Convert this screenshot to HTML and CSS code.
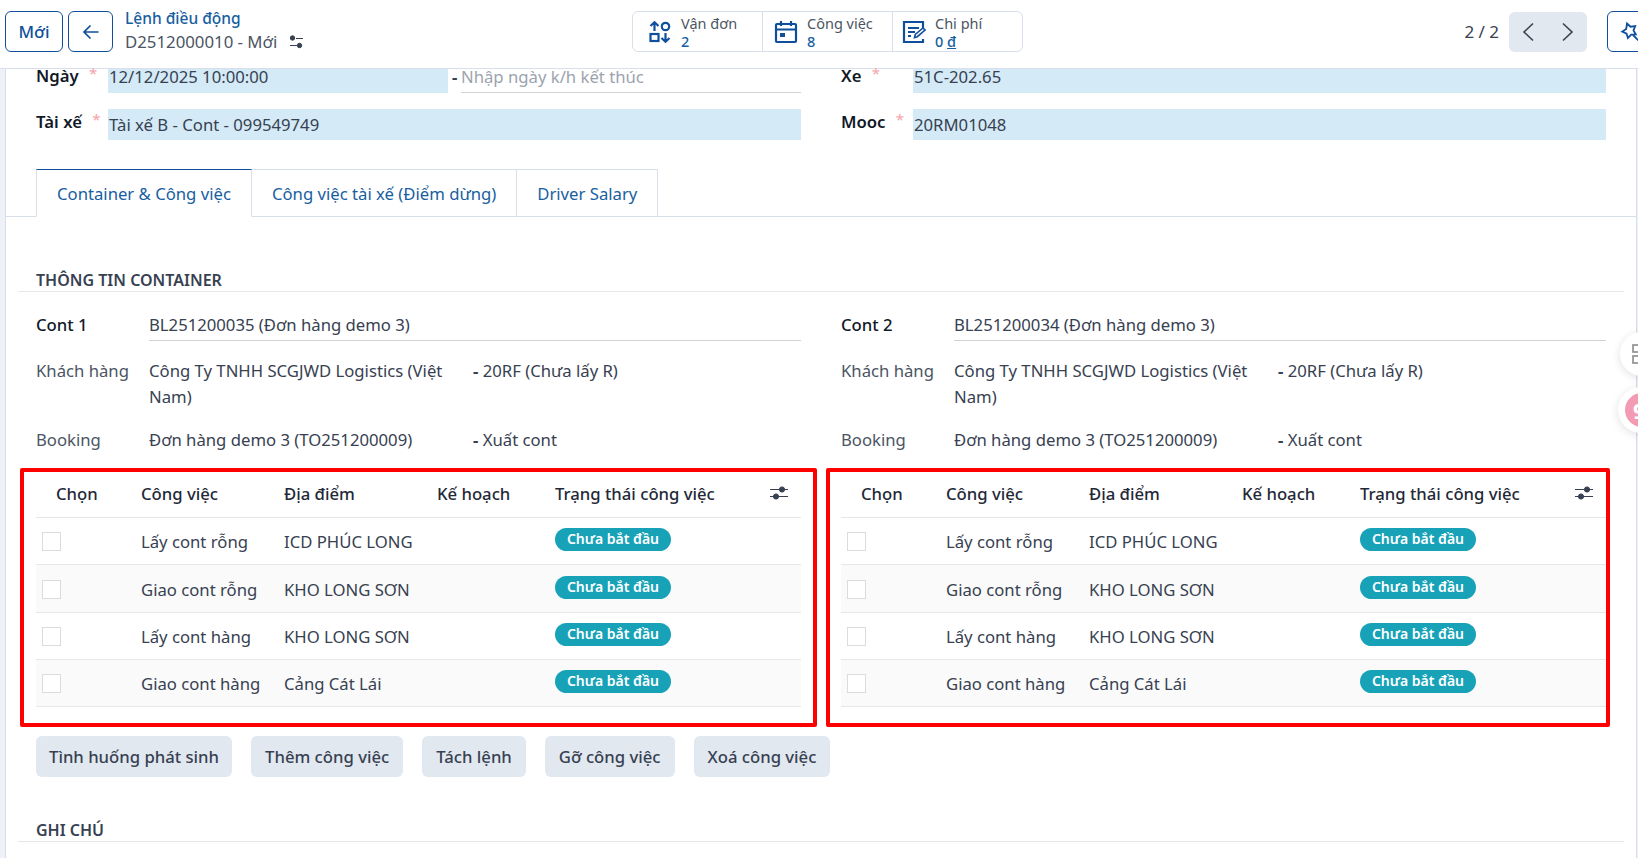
FILE: index.html
```html
<!DOCTYPE html>
<html lang="vi">
<head>
    <meta charset="UTF-8">
    <title>Lệnh điều động</title>
    <link rel="stylesheet" href="styles.css">
</head>
<body>
    <div class="header">
        <div class="header-left">
            <button class="btn-outline btn-new">Mới</button>
            <button class="btn-outline btn-back">
                <svg width="20" height="20" viewBox="0 0 20 20" fill="none" stroke="currentColor" stroke-width="1.7"><path d="M17.500 10H3.500M9.500 3.500 3 10l6.500 6.500"/></svg>
            </button>
            <div class="crumb">
                <a class="crumb-parent">Lệnh điều động</a>
                <div class="crumb-current">
                    <span>D2512000010 - Mới</span>
                    <svg width="15" height="14" viewBox="0 0 15 14" fill="#374151" stroke="#374151"><circle cx="3.500" cy="3" r="2.200"/><circle cx="10.500" cy="10.500" r="2.200"/><path d="M7 3.500h7M1 10.500h7" fill="none" stroke-width="1.200"/></svg>
                </div>
            </div>
        </div>
        <div class="stats">
            <div class="stat">
                <svg width="24" height="24" viewBox="0 0 24 24" fill="none" stroke="#0f4f9c" stroke-width="2.200"><path d="M6.500 11V2.500M2.500 6l4-3.800 4 3.800"/><circle cx="17.500" cy="6.500" r="3.700"/><rect x="2.500" y="14" width="8" height="7"/><path d="M17.500 13v8.500M13.500 18l4 3.800 4-3.800"/></svg>
                <div class="stat-text"><span>Vận đơn</span><b>2</b></div>
            </div>
            <div class="stat">
                <svg width="24" height="24" viewBox="0 0 24 24" fill="none" stroke="#0f4f9c" stroke-width="2.200"><rect x="2" y="4" width="20" height="18" rx="1"/><path d="M2 9.500h20M7 1v5M17 1v5"/><rect x="6" y="13" width="5" height="4" fill="#0f4f9c" stroke="none"/></svg>
                <div class="stat-text"><span>Công việc</span><b>8</b></div>
            </div>
            <div class="stat">
                <svg width="24" height="24" viewBox="0 0 24 24" fill="none" stroke="#0f4f9c" stroke-width="2.200"><path d="M21 8V2H2v20h19v-3"/><path d="M6 8h11M6 12h7M6 16h3"/><path d="M12.500 17.500l.8-3 7.700-6.500 2 2-7.700 6.700z" stroke-width="1.600"/></svg>
                <div class="stat-text"><span>Chi phí</span><b>0 <u>đ</u></b></div>
            </div>
        </div>
        <div class="header-right">
            <span class="pager-count">2 / 2</span>
            <div class="pager-nav">
                <svg width="14" height="20" viewBox="0 0 14 20" fill="none" stroke="#374151" stroke-width="1.600"><path d="M11 1.500 2 10l9 8.500"/></svg>
                <svg width="14" height="20" viewBox="0 0 14 20" fill="none" stroke="#374151" stroke-width="1.600"><path d="M3 1.500 12 10l-9 8.500"/></svg>
            </div>
            <button class="btn-outline btn-star">
                <svg width="22" height="22" viewBox="0 0 22 22" fill="none" stroke="currentColor" stroke-width="1.800"><path d="M8 2.500l3.500 3.200 4.700-.6-1.700 4.400 2.300 4-4.700.2-3.200 3.400-1.300-4.500-4.300-2 3.900-2.600z"/><path d="M14 14l6 6"/></svg>
            </button>
        </div>
    </div>

    <div class="sheet">
        <div class="form-top">
            <div class="field">
                <label>Ngày <i>*</i></label>
                <div class="date-range">
                    <div class="input-req input-start">12/12/2025 10:00:00</div>
                    <span class="dash">-</span>
                    <div class="input-plain">Nhập ngày k/h kết thúc</div>
                </div>
            </div>
            <div class="field">
                <label>Xe <i>*</i></label>
                <div class="input-req input-first">51C-202.65</div>
            </div>
            <div class="field field-tall">
                <label>Tài xế <i>*</i></label>
                <div class="input-req">Tài xế B - Cont - 099549749</div>
            </div>
            <div class="field field-tall">
                <label>Mooc <i>*</i></label>
                <div class="input-req">20RM01048</div>
            </div>
        </div>

        <div class="tabs">
            <a class="tab active">Container &amp; Công việc</a>
            <a class="tab">Công việc tài xế (Điểm dừng)</a>
            <a class="tab">Driver Salary</a>
        </div>

        <h3 class="section-title">THÔNG TIN CONTAINER</h3>

        <div class="conts">
            <div class="cont">
                <div class="info-row info-main">
                    <label>Cont 1</label>
                    <div class="info-value underlined">BL251200035 (Đơn hàng demo 3)</div>
                </div>
                <div class="info-row">
                    <label>Khách hàng</label>
                    <div class="info-value half">Công Ty TNHH SCGJWD Logistics (Việt Nam)</div>
                    <div class="info-extra"><b>-</b> 20RF (Chưa lấy R)</div>
                </div>
                <div class="info-row">
                    <label>Booking</label>
                    <div class="info-value half">Đơn hàng demo 3 (TO251200009)</div>
                    <div class="info-extra"><b>-</b> Xuất cont</div>
                </div>
                <div class="red-box">
                    <table class="job-table">
                        <thead>
                            <tr><th class="col-check">Chọn</th><th class="col-job">Công việc</th><th class="col-place">Địa điểm</th><th class="col-plan">Kế hoạch</th><th>Trạng thái công việc</th><th class="col-opt"><svg width="20" height="18" viewBox="0 0 20 18" fill="#374151" stroke="#374151"><path d="M1 5.500h18M1 12.500h18" fill="none" stroke-width="1.200"/><circle cx="13" cy="5.500" r="2.600"/><circle cx="7" cy="12.500" r="2.600"/></svg></th></tr>
                        </thead>
                        <tbody>
                            <tr><td><span class="check"></span></td><td>Lấy cont rỗng</td><td>ICD PHÚC LONG</td><td></td><td><span class="badge">Chưa bắt đầu</span></td><td></td></tr>
                            <tr><td><span class="check"></span></td><td>Giao cont rỗng</td><td>KHO LONG SƠN</td><td></td><td><span class="badge">Chưa bắt đầu</span></td><td></td></tr>
                            <tr><td><span class="check"></span></td><td>Lấy cont hàng</td><td>KHO LONG SƠN</td><td></td><td><span class="badge">Chưa bắt đầu</span></td><td></td></tr>
                            <tr><td><span class="check"></span></td><td>Giao cont hàng</td><td>Cảng Cát Lái</td><td></td><td><span class="badge">Chưa bắt đầu</span></td><td></td></tr>
                        </tbody>
                    </table>
                </div>
            </div>
            <div class="cont">
                <div class="info-row info-main">
                    <label>Cont 2</label>
                    <div class="info-value underlined">BL251200034 (Đơn hàng demo 3)</div>
                </div>
                <div class="info-row">
                    <label>Khách hàng</label>
                    <div class="info-value half">Công Ty TNHH SCGJWD Logistics (Việt Nam)</div>
                    <div class="info-extra"><b>-</b> 20RF (Chưa lấy R)</div>
                </div>
                <div class="info-row">
                    <label>Booking</label>
                    <div class="info-value half">Đơn hàng demo 3 (TO251200009)</div>
                    <div class="info-extra"><b>-</b> Xuất cont</div>
                </div>
                <div class="red-box red-box-right">
                    <table class="job-table">
                        <thead>
                            <tr><th class="col-check">Chọn</th><th class="col-job">Công việc</th><th class="col-place">Địa điểm</th><th class="col-plan">Kế hoạch</th><th>Trạng thái công việc</th><th class="col-opt"><svg width="20" height="18" viewBox="0 0 20 18" fill="#374151" stroke="#374151"><path d="M1 5.500h18M1 12.500h18" fill="none" stroke-width="1.200"/><circle cx="13" cy="5.500" r="2.600"/><circle cx="7" cy="12.500" r="2.600"/></svg></th></tr>
                        </thead>
                        <tbody>
                            <tr><td><span class="check"></span></td><td>Lấy cont rỗng</td><td>ICD PHÚC LONG</td><td></td><td><span class="badge">Chưa bắt đầu</span></td><td></td></tr>
                            <tr><td><span class="check"></span></td><td>Giao cont rỗng</td><td>KHO LONG SƠN</td><td></td><td><span class="badge">Chưa bắt đầu</span></td><td></td></tr>
                            <tr><td><span class="check"></span></td><td>Lấy cont hàng</td><td>KHO LONG SƠN</td><td></td><td><span class="badge">Chưa bắt đầu</span></td><td></td></tr>
                            <tr><td><span class="check"></span></td><td>Giao cont hàng</td><td>Cảng Cát Lái</td><td></td><td><span class="badge">Chưa bắt đầu</span></td><td></td></tr>
                        </tbody>
                    </table>
                </div>
            </div>
        </div>

        <div class="actions">
            <button class="btn-gray">Tình huống phát sinh</button>
            <button class="btn-gray">Thêm công việc</button>
            <button class="btn-gray">Tách lệnh</button>
            <button class="btn-gray">Gỡ công việc</button>
            <button class="btn-gray">Xoá công việc</button>
        </div>

        <h3 class="section-title section-note">GHI CHÚ</h3>
    </div>

    <!-- floating helpers on the right edge -->
    <div class="float-btn float-grid">
        <svg width="16" height="20" viewBox="0 0 16 20" fill="none" stroke="#8a8a8a" stroke-width="1.600"><rect x="1" y="1" width="12" height="7"/><rect x="1" y="12" width="12" height="7"/></svg>
    </div>
    <div class="float-btn float-pink"><span class="pink-dot">9</span></div>
</body>
</html>
```

FILE: styles.css
```css
* {
    box-sizing: border-box;
    margin: 0;
    padding: 0;
}
html, body {
    height: 858px;
    overflow: hidden;
}
body {
    background-color: #eef1f8;
    color: #374151;
    font-family: "Noto Sans", Arial, sans-serif;
    font-size: 16.700px;
    position: relative;
}
button {
    font-family: inherit;
}

/* Header */
.header {
    height: 69px;
    background-color: #fff;
    border-bottom: 1px solid #d8dfeb;
    padding: 11px 0 0 5px;
    display: flex;
    align-items: flex-start;
}
.header-left {
    width: 627px;
    display: flex;
    align-items: flex-start;
    gap: 5px;
}
.btn-outline {
    height: 41px;
    background-color: #fff;
    border: 1px solid #0f4f9c;
    border-radius: 6px;
    color: #0f4f9c;
    display: flex;
    align-items: center;
    justify-content: center;
}
.btn-new {
    width: 58px;
    font-size: 17px;
    font-weight: 500;
}
.btn-back {
    width: 45px;
}
.crumb {
    margin-left: 7px;
    margin-top: -5px;
    line-height: 24px;
}
.crumb-parent {
    display: block;
    color: #17609f;
    font-size: 15.500px;
    font-weight: 500;
}
.crumb-current {
    display: flex;
    align-items: center;
    gap: 12px;
    font-size: 16.800px;
    color: #4b5563;
}
.stats {
    width: 391px;
    height: 41px;
    display: flex;
    border: 1px solid #d8dfeb;
    border-radius: 6px;
}
.stat {
    width: 130px;
    flex: none;
    display: flex;
    align-items: center;
    gap: 9px;
    padding-left: 15px;
    border-right: 1px solid #d8dfeb;
}
.stat:nth-child(2) {
    padding-left: 11px;
}
.stat:last-child {
    padding-left: 9px;
    border-right: none;
}
.stat-text {
    display: flex;
    flex-direction: column;
    padding-top: 1px;
    font-size: 14.500px;
    line-height: 18px;
    color: #4b5563;
}
.stat-text b {
    color: #17609f;
    font-weight: 500;
}
.header-right {
    margin-left: auto;
    margin-right: -14px;
    display: flex;
    align-items: center;
    height: 41px;
}
.pager-count {
    font-size: 17px;
    margin-right: 10px;
}
.pager-nav {
    width: 78px;
    height: 40px;
    background-color: #e2e8f0;
    border-radius: 6px;
    display: flex;
    justify-content: space-between;
    align-items: center;
    padding: 0 13px;
}
.btn-star {
    width: 45px;
    margin-left: 20px;
}

/* Sheet */
.sheet {
    height: 789px;
    margin: 0 1px 0 5px;
    padding: 0 30px;
    background-color: #fff;
    border-left: 1px solid #d8dfeb;
    border-right: 1px solid #d8dfeb;
}
.form-top {
    display: grid;
    grid-template-columns: 1fr 1fr;
    column-gap: 40px;
}
.field {
    display: flex;
    height: 24px;
}
.field-tall {
    height: 31px;
    margin-top: 16px;
}
.field label {
    width: 72px;
    font-weight: 600;
    color: #111827;
    line-height: 14px;
    flex-shrink: 0;
}
.field-tall label {
    line-height: 26px;
}
.field i {
    color: #f5a3a8;
    font-style: normal;
    font-weight: 400;
    font-size: 15px;
    position: relative;
    top: -3px;
    margin-left: 6px;
}
.input-req {
    flex: 1;
    background-color: #d4eaf7;
    padding-left: 1px;
    line-height: 31px;
    color: #374151;
}
.input-first {
    line-height: 16px;
}
.date-range {
    flex: 1;
    display: flex;
}
.input-start {
    flex: none;
    width: 340px;
    line-height: 16px;
}
.dash {
    width: 13px;
    padding-left: 4px;
    font-weight: 700;
    line-height: 16px;
}
.input-plain {
    flex: 1;
    color: #9ca3af;
    border-bottom: 1px solid #cfd2d6;
    line-height: 16px;
}

/* Tabs */
.tabs {
    display: flex;
    margin: 29px -30px 0;
    padding-left: 30px;
    border-bottom: 1px solid #d8dfeb;
    height: 48px;
}
.tab {
    height: 48px;
    line-height: 48px;
    padding: 0 20px;
    color: #17609f;
    border-top: 1px solid #d8dfeb;
    border-right: 1px solid #d8dfeb;
}
.tab.active {
    border-top-color: #0f4f9c;
    border-left: 1px solid #d8dfeb;
    border-bottom: 1px solid #fff;
}

.section-title {
    margin: 53px -18px 0;
    padding: 0 0 1px 18px;
    font-size: 16px;
    font-weight: 600;
    line-height: 20px;
    color: #374151;
    border-bottom: 1px solid #e5e7eb;
}

/* Container info */
.conts {
    display: grid;
    grid-template-columns: 1fr 1fr;
    column-gap: 40px;
    margin-top: 20px;
}
.info-row {
    display: flex;
    margin-top: 17px;
    line-height: 26px;
}
.info-main {
    margin-top: 0;
}
.info-row label {
    width: 113px;
    flex-shrink: 0;
    color: #4b5563;
}
.info-main label {
    color: #111827;
    font-weight: 500;
}
.info-value {
    flex: 1;
}
.underlined {
    border-bottom: 1px solid #cfd2d6;
    height: 29px;
}
.half {
    flex: none;
    width: 324px;
}
.info-extra b {
    font-weight: 700;
}
.red-box {
    margin: 15px -16px 0;
    padding: 0 12px 16px;
    border: 4px solid #ff0000;
    border-radius: 2px;
}
.red-box-right {
    margin-left: -15px;
    margin-right: -4px;
    padding-left: 11px;
    padding-right: 0;
}
.job-table {
    width: 100%;
    border-collapse: collapse;
    table-layout: fixed;
}
.job-table th {
    text-align: left;
    font-weight: 500;
    color: #1f2937;
    height: 45px;
    padding-bottom: 2px;
    border-bottom: 1px solid #e5e7eb;
}
.job-table td {
    height: 47px;
    padding-top: 2px;
    border-bottom: 1px solid #e5e7eb;
    vertical-align: middle;
}
.job-table tbody tr:nth-child(2) td {
    height: 48px;
}
.job-table tbody tr:nth-child(even) {
    background-color: #fafafa;
}
.col-check {
    width: 105px;
    padding-left: 20px;
}
.col-job {
    width: 143px;
}
.col-place {
    width: 153px;
}
.col-plan {
    width: 118px;
}
.col-opt {
    width: 46px;
    padding-left: 14px;
}
.col-opt svg {
    display: block;
}
.check {
    display: block;
    width: 19px;
    height: 19px;
    margin-left: 6px;
    border: 1px solid #dcdcdc;
    background-color: #fff;
}
.badge {
    display: inline-block;
    width: 116px;
    height: 23px;
    line-height: 22px;
    margin-bottom: 4px;
    background-color: #17a2b8;
    border-radius: 12px;
    color: #fff;
    font-size: 14px;
    font-weight: 600;
    text-align: center;
    vertical-align: middle;
}

/* Actions */
.actions {
    display: flex;
    gap: 19px;
    margin-top: 9px;
}
.btn-gray {
    height: 41px;
    padding: 0 14px;
    border: none;
    border-radius: 6px;
    background-color: #e2e8f0;
    color: #374151;
    font-size: 16.700px;
    font-weight: 500;
}
.btn-gray:first-child {
    padding: 0 13px;
}
.section-note {
    margin-top: 43px;
}

/* Floating buttons */
.float-btn {
    position: absolute;
    left: 1620px;
    width: 44px;
    height: 44px;
    border-radius: 50%;
    background-color: #fff;
    box-shadow: 0 2px 10px rgba(0, 0, 0, 0.12);
    display: flex;
    align-items: center;
    padding-left: 12px;
}
.float-grid {
    top: 332px;
}
.float-pink {
    top: 387px;
    left: 1618px;
    width: 46px;
    height: 46px;
    padding-left: 7px;
}
.pink-dot {
    flex-shrink: 0;
    width: 34px;
    height: 34px;
    padding-left: 8px;
    border-radius: 50%;
    background-color: #f29bb3;
    color: #fff;
    font-weight: 700;
    font-size: 22px;
    line-height: 34px;
}
```
